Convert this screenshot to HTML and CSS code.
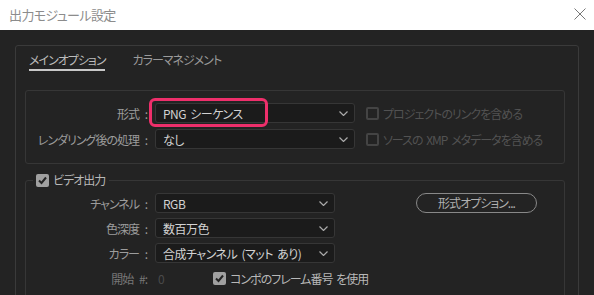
FILE: index.html
```html
<!DOCTYPE html>
<html lang="ja">
<head>
  <meta charset="UTF-8" />
  <title>出力モジュール設定</title>
  <link rel="stylesheet" href="styles.css">
</head>
<body>
  <!-- Title bar -->
  <div class="titlebar">
    <span class="title">出力モジュール設定</span>
    <svg class="close" width="12" height="12" viewBox="0 0 12 12">
      <path d="M0.5,0.5 L11.5,11.5 M11.5,0.5 L0.5,11.5" />
    </svg>
  </div>

  <div class="dialog">
    <div class="panel">
      <!-- Tabs -->
      <div class="tabs">
        <div class="tab active">メインオプション</div>
        <div class="tab">カラーマネジメント</div>
      </div>

      <!-- Format group -->
      <div class="group">
        <div class="row row-main">
          <div class="label">形式 :</div>
          <div class="select">
            <span>PNG シーケンス</span>
            <svg class="chev" width="9" height="5" viewBox="0 0 9 5"><path d="M0.5,0.5 L4.5,4.5 L8.5,0.5" /></svg>
            <div class="highlight"></div>
          </div>
          <label class="check disabled"><span class="box"></span>プロジェクトのリンクを含める</label>
        </div>
        <div class="row row-main">
          <div class="label">レンダリング後の処理 :</div>
          <div class="select">
            <span>なし</span>
            <svg class="chev" width="9" height="5" viewBox="0 0 9 5"><path d="M0.5,0.5 L4.5,4.5 L8.5,0.5" /></svg>
          </div>
          <label class="check disabled"><span class="box"></span>ソースの XMP メタデータを含める</label>
        </div>
      </div>

      <!-- Video output group -->
      <fieldset class="group video">
        <legend>
          <label class="check on"><span class="box"><svg width="13" height="13" viewBox="0 0 13 13"><path d="M3,6.5 L5.5,9 L10,3.5" /></svg></span>ビデオ出力</label>
        </legend>
        <div class="row row-video">
          <div class="label">チャンネル :</div>
          <div class="select">
            <span>RGB</span>
            <svg class="chev" width="9" height="5" viewBox="0 0 9 5"><path d="M0.5,0.5 L4.5,4.5 L8.5,0.5" /></svg>
          </div>
          <button class="pill">形式オプション...</button>
        </div>
        <div class="row row-video">
          <div class="label">色深度 :</div>
          <div class="select">
            <span>数百万色</span>
            <svg class="chev" width="9" height="5" viewBox="0 0 9 5"><path d="M0.5,0.5 L4.5,4.5 L8.5,0.5" /></svg>
          </div>
        </div>
        <div class="row row-video">
          <div class="label">カラー :</div>
          <div class="select">
            <span>合成チャンネル (マット あり)</span>
            <svg class="chev" width="9" height="5" viewBox="0 0 9 5"><path d="M0.5,0.5 L4.5,4.5 L8.5,0.5" /></svg>
          </div>
        </div>
        <div class="row row-start">
          <div class="label dim">開始 #:</div>
          <div class="start-val">0</div>
          <label class="check on"><span class="box"><svg width="13" height="13" viewBox="0 0 13 13"><path d="M3,6.5 L5.5,9 L10,3.5" /></svg></span>コンポのフレーム番号 を使用</label>
        </div>
      </fieldset>
    </div>
  </div>
</body>
</html>
```

FILE: styles.css
```css
/* BASE */
* {
  margin: 0; padding: 0;
  box-sizing: border-box;
}
body {
  width: 594px; height: 295px;
  overflow: hidden;
  background: #232323;
  font-family: "Noto Sans CJK JP", "Noto Sans", sans-serif;
  font-feature-settings: "palt";
  font-size: 12px;
  letter-spacing: -1px;
  word-spacing: 2px;
  color: #9c9c9c;
}

/* TITLE BAR */
.titlebar {
  height: 30px;
  background: #fff;
  display: flex; align-items: center;
  justify-content: space-between;
  padding: 0 8px 2px 9px;
}
.title { font-size: 13px; color: #8c8c8c; letter-spacing: -0.6px; }
.close path { stroke: #777; stroke-width: 1; fill: none; }

/* PANEL */
.dialog { padding: 15px 15px 0 15px; }
.panel {
  height: 300px;
  border: 1px solid #3a3a3a;
  border-radius: 3px;
  padding: 6px 13px 0 9px;
}

/* TABS */
.tabs {
  display: flex; gap: 27px;
  padding-left: 4px;
}
.tab {
  line-height: 16px;
  padding-bottom: 1px;
  border-bottom: 2px solid transparent;
  color: #9a9a9a;
}
.tab.active { color: #bcbcbc; border-bottom-color: #c8c8c8; }

/* GROUPS */
.group {
  margin-top: 19px;
  border: 1px solid #363636;
  border-radius: 3px;
  padding: 12px 0 14px 0;
  display: flex; flex-direction: column; gap: 6px;
}
.group.video {
  margin-top: 8px;
  padding: 5px 0 20px 0;
  gap: 5px;
  min-width: 0;
}
.video legend {
  margin-left: 7px;
  padding: 0 4px 0 3px;
  line-height: 16px;
}

/* ROWS */
.row {
  display: grid;
  align-items: center;
  column-gap: 8px;
  height: 20px;
}
.row-main  { grid-template-columns: 121px 200px auto; }
.row-video { grid-template-columns: 121px 180px auto; }
.row-start { grid-template-columns: 121px 50px auto; }
.label { text-align: right; white-space: nowrap; word-spacing: 4px; }
.label.dim { color: #777; }
.start-val { color: #4a4a4a; padding-left: 3px; }

/* SELECT */
.select {
  position: relative;
  height: 20px;
  display: flex; align-items: center;
  justify-content: space-between;
  padding: 0 6px 0 7px;
  background: #1b1b1b;
  border: 1px solid #363636;
  border-radius: 3px;
  color: #d2d2d2;
  white-space: nowrap;
  letter-spacing: -0.5px;
}
.chev path { stroke: #aaa; stroke-width: 1.2; fill: none; }
.highlight {
  position: absolute;
  left: -7px; top: -6px;
  width: 119px; height: 29px;
  border: 3px solid #ee2f6b;
  border-radius: 6px;
  pointer-events: none;
}

/* CHECKBOXES */
.check {
  display: flex; align-items: center; gap: 4px;
  white-space: nowrap;
}
.check .box {
  width: 13px; height: 13px;
  border-radius: 2px;
  flex: none;
}
.check.disabled { margin-left: 3px; color: #525252; }
.check.disabled .box { border: 2px solid #444; }
.check.on { color: #b8b8b8; }
.check.on .box { background: #a0a0a0; }
.check.on svg { display: block; }
.check.on path { stroke: #242424; stroke-width: 2; fill: none; }

/* BUTTON */
.pill {
  margin-left: 73px;
  width: 121px; height: 20px;
  border: 1px solid #888;
  border-radius: 10px;
  background: transparent;
  color: #b0b0b0;
  font: inherit;
  letter-spacing: -1px;
  line-height: 16px;
}
```
